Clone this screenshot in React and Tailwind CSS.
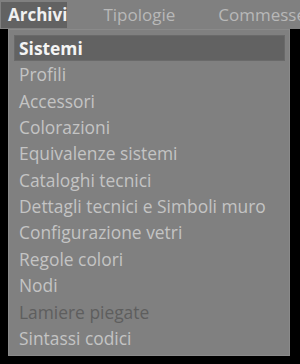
export default function App() {
  const items = [
    "Profili",
    "Accessori",
    "Colorazioni",
    "Equivalenze sistemi",
    "Cataloghi tecnici",
    "Dettagli tecnici e Simboli muro",
    "Configurazione vetri",
    "Regole colori",
    "Nodi",
    "Lamiere piegate",
    "Sintassi codici",
  ];
  return (
    <div className="w-[300px] h-[364px] bg-black overflow-hidden flex flex-col" style={{ fontFamily: '"Open Sans", "Noto Sans", sans-serif' }}>
      <div className="h-[29px] bg-[#808080] flex items-center shrink-0 whitespace-nowrap">
        <div className="ml-[1px] h-[26px] w-[71px] bg-[#626262] flex items-center pl-[7px] text-[17px] font-bold text-[#f0f0f0]">Archivi</div>
        <div className="ml-[36px] text-[17px] text-[#b8b8b8]">Tipologie</div>
        <div className="ml-[43px] text-[17px] text-[#b8b8b8]">Commesse</div>
      </div>
      <div className="ml-[8px] w-[282px] h-[327px] bg-[#808080] border border-[#8a8a8a] pt-[5px] pl-[5px] pr-[4px] text-[17.4px]">
        <div className="h-[26px] bg-[#626262] border border-[#6a6a6a] flex items-center pl-[4px] font-bold text-[#f4f4f4]">Sistemi</div>
        {items.map((t) => (
          <div key={t} className={"h-[26.4px] flex items-center pl-[5px] whitespace-nowrap " + (t === "Lamiere piegate" ? "text-[#5e5e5e]" : "text-[#c4c4c4]")}>{t}</div>
        ))}
      </div>
    </div>
  );
}
